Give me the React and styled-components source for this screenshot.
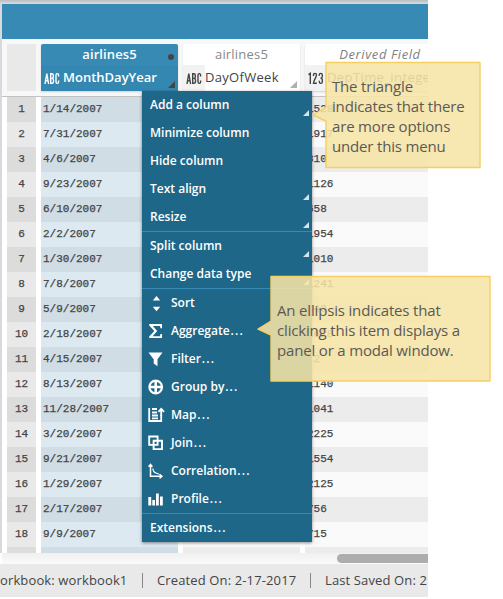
import React from "react";
import styled, { createGlobalStyle, css } from "styled-components";

const Global = createGlobalStyle`
  * { box-sizing: border-box; }
  body { margin: 0; background: #fff; font-family: "Open Sans", sans-serif; color: #444; }
`;

const Page = styled.div`
  position: relative;
  width: 503px;
  height: 599px;
  overflow: hidden;
  background: #fff;
`;
const Workbook = styled.div`
  width: 428px;
  height: 597px;
  display: flex;
  flex-direction: column;
  overflow: hidden;
`;
const TopEdge = styled.div`
  flex: none;
  height: 4px;
  background: linear-gradient(#b9bdbf, #d9dddf);
`;
const Body = styled.div`
  flex: none;
  height: 560px;
  display: flex;
`;
const LeftEdge = styled.div`
  flex: none;
  width: 2px;
  height: 549px;
  background: #d6dade;
`;
const Sheet = styled.div`
  flex: 1;
  min-width: 0;
  background: #fff;
`;
const Banner = styled.div`
  height: 35px;
  background: #368ab3;
`;
const HeaderRow = styled.div`
  height: 58px;
  padding: 5px 0 0 5px;
  display: flex;
  align-items: flex-start;
  gap: 5px;
  background: #f8f8f8;
  border-bottom: 1px solid #c2c2c2;
`;
const Corner = styled.div`
  flex: none;
  width: 29px;
  height: 47px;
  background: #e9e9e9;
`;
const HeadCell = styled.div`
  position: relative;
  flex: none;
  width: ${(p) => p.$w}px;
  height: 47px;
  border-radius: 2px 2px 0 0;
  background: ${(p) => (p.$active ? "#368ab3" : "#fff")};
  color: ${(p) => (p.$active ? "#fff" : "#444")};
  box-shadow: 0 1px 2px rgba(0, 0, 0, 0.16);
  font-weight: ${(p) => (p.$active ? 600 : 500)};
`;
const Source = styled.div`
  height: 21px;
  line-height: 21px;
  font-size: 13px;
  text-align: center;
  white-space: nowrap;
  letter-spacing: ${(p) => (p.$active ? 0.1 : 0.2)}px;
  color: ${(p) => (p.$active ? "#fff" : "#888")};
  ${(p) => p.$derived && css`
    font-style: italic;
    color: #808080;
    letter-spacing: 0.6px;
  `}
`;
const Field = styled.div`
  height: 26px;
  display: flex;
  align-items: center;
  font-size: 13px;
  background: ${(p) => (p.$active ? "#3387b0" : p.$derived ? "#f2f2f2" : "#fff")};
`;
const TypeTag = styled.span`
  flex: none;
  width: 22px;
  height: 26px;
  padding-left: 3px;
  display: flex;
  align-items: center;
  background: ${(p) => (p.$active ? "transparent" : "#f2f2f2")};
`;
const FieldName = styled.span`
  white-space: nowrap;
  line-height: 24px;
  padding-bottom: 2px;
  letter-spacing: ${(p) => p.$track || 0}px;
`;
const Dot = styled.span`
  position: absolute;
  right: 4px;
  top: 10px;
  width: 6px;
  height: 6px;
  border-radius: 50%;
  background: #444;
`;
const Triangle = styled.span`
  position: absolute;
  right: 3px;
  bottom: 3px;
  width: ${(p) => p.$s}px;
  height: ${(p) => p.$s}px;
  background: ${(p) => p.$c};
  clip-path: polygon(100% 0, 100% 100%, 0 100%);
`;
const Rows = styled.div`
  height: 456px;
  overflow: hidden;
`;
const Row = styled.div`
  height: 25px;
  padding-left: 5px;
  display: flex;
  gap: 5px;
  font: 11px/25px "Liberation Mono", monospace;
  -webkit-text-stroke: 0.25px #444;
  color: #444;
  white-space: nowrap;
`;
const Cell = styled.div`
  flex: none;
  width: ${(p) => p.$w}px;
  padding-left: 2px;
  background: ${(p) => (p.$odd ? "#ececec" : "#fafafa")};
  ${(p) => p.$kind === "num" && css`
    padding: 0;
    text-align: center;
    background: ${p.$odd ? "#dcdcdc" : "#e9e9e9"};
  `}
  ${(p) => p.$kind === "active" && css`
    background: ${p.$odd ? "#d0dde5" : "#dce9f1"};
  `}
`;
const ScrollTrack = styled.div`
  height: 11px;
  display: flex;
  justify-content: flex-end;
  padding-top: 1px;
  background: linear-gradient(#f0f0f0, #fafafa);
`;
const ScrollThumb = styled.div`
  width: 91px;
  height: 9px;
  border-radius: 5px 0 0 5px;
  background: #adadad;
`;
const Footer = styled.div`
  flex: none;
  height: 33px;
  display: flex;
  align-items: center;
  background: #e9e9e9;
  font-size: 13px;
  letter-spacing: 0.13px;
  white-space: nowrap;
`;
const FooterText = styled.span`
  flex: none;
  width: ${(p) => p.$w}px;
  margin-left: ${(p) => p.$ml}px;
  line-height: 30px;
  padding-bottom: 1px;
`;
const Divider = styled.span`
  flex: none;
  width: 1px;
  height: 15px;
  background: #888;
`;
const Menu = styled.div`
  position: absolute;
  left: 142px;
  top: 91px;
  width: 170px;
  height: 451px;
  background: #1f6788;
  color: #fff;
  box-shadow: 0 1px 3px rgba(0, 0, 0, 0.45);
`;
const MenuGroup = styled.div`
  & + & { border-top: 1px solid #368ab3; }
`;
const MenuItem = styled.div`
  position: relative;
  height: 28px;
  padding-left: ${(p) => (p.$icon ? 6 : 8)}px;
  display: flex;
  align-items: center;
  font-size: 12px;
  font-weight: 600;
  line-height: 28px;
  white-space: nowrap;
`;
const Ellipsis = styled.span`
  letter-spacing: 1.2px;
  margin-left: 0.8px;
`;
const IconSlot = styled.span`
  width: 23px;
  height: 16px;
  svg { display: block; }
`;
const Callout = styled.div`
  position: absolute;
  left: ${(p) => p.$x}px;
  top: ${(p) => p.$y}px;
  width: ${(p) => p.$w}px;
  height: ${(p) => p.$h}px;
  padding: ${(p) => p.$pt}px 0 0 20px;
  color: #5a5a55;
  font-size: 15px;
  line-height: 20px;
  letter-spacing: -0.17px;
  white-space: nowrap;
`;
const CalloutShape = styled.svg`
  position: absolute;
  left: 0;
  top: 0;
`;
const CalloutLine = styled.div`
  position: relative;
`;

const dates = ["1/14/2007", "7/31/2007", "4/6/2007", "9/23/2007", "6/10/2007", "2/2/2007", "1/30/2007", "7/8/2007", "5/9/2007", "2/18/2007", "4/15/2007", "8/13/2007", "11/28/2007", "3/20/2007", "9/21/2007", "1/29/2007", "2/17/2007", "9/9/2007", ""];
const times = ["1528", "1917", "810", "1126", "658", "1954", "1010", "1241", "840", "1628", "-2", "1140", "1041", "2225", "1554", "2125", "756", "715", ""];

const icons = {
  sort: <path d="M8.5 1L12.2 5.5H4.8zM4.8 11.8h7.4L8.5 16.3z" />,
  sum: <path d="M1.2 1H14v4.2h-1.5l-.5-2.2H4.8l4.4 5-4.6 5.2H12l.5-2.2H14V15H1.2v-1.6L6.3 8 1.2 2.6z" />,
  filter: <path d="M.5 1.5h14L9.5 8.2v7l-3.8-2.7V8.2z" />,
  group: <g fill="none" stroke="#fff"><circle cx="7.7" cy="8" r="6.3" strokeWidth="2.2" /><path d="M7.7 2v12M1.7 8h12" strokeWidth="2.5" /></g>,
  map: <g fill="none" stroke="#fff" strokeWidth="1.8"><path d="M1.2 1v14M1 14h12.2V8M4 2h5M4 5.5h5M4 8.5h6M4 11.3h6" /><path d="M13.2 9V3M10.4 4.8l2.8-3 2.8 3" /></g>,
  join: <g fill="none" stroke="#fff" strokeWidth="1.9"><path d="M1.2 1.5h8.4v8.4H1.2zM5.6 5.7h8.4v8.4H5.6z" /></g>,
  corr: <g fill="none" stroke="#fff" strokeWidth="1.5"><path d="M2.5 2v11.3h11M.6 3.8l1.9-2.3 1.9 2.3M11.5 11.2l2.4 2.1-2.4 2.1" /><path d="M4.8 5.5c.3 3.2 2.3 5 6 5.3" strokeWidth="1.2" /></g>,
  profile: <path d="M.3 6h2.9v8.5H.3zM4.3 9H7v5.5H4.3zM8 2.5h2.8v12H8zM12 5.5h2.8v9H12z" />,
};

const groups = [
  [["Add a column", null, true], ["Minimize column"], ["Hide column"], ["Text align", null, true], ["Resize", null, true]],
  [["Split column", null, true], ["Change data type", null, true]],
  [["Sort", "sort"], ["Aggregate...", "sum"], ["Filter...", "filter"], ["Group by...", "group"], ["Map...", "map"], ["Join...", "join"], ["Correlation...", "corr"], ["Profile...", "profile"]],
  [["Extensions..."]],
];

const Label = ({ text }) => {
  const dots = text.endsWith("...");
  return (
    <span>
      {dots ? text.slice(0, -3) : text}
      {dots && <Ellipsis>...</Ellipsis>}
    </span>
  );
};

const AbcIcon = ({ color }) => (
  <svg width="16" height="13" viewBox="0 0 16 13" fill="none" stroke={color} strokeWidth="1.4">
    <path d="M1 12L2.8 1.5 4.6 12M1.5 8.8h2.6M6.7 1.7v9.6h1c1.2 0 1.8-.5 1.8-1.5V8c0-1-.6-1.6-1.6-1.6.9 0 1.4-.6 1.4-1.4V3.2c0-1-.5-1.5-1.5-1.5zM6.7 6.4h1.2M14.6 4.4V3.2c0-1-.5-1.6-1.3-1.6S12 2.2 12 3.2v6.6c0 1 .5 1.6 1.3 1.6s1.3-.6 1.3-1.6V8.4" />
  </svg>
);
const NumIcon = () => (
  <svg width="16" height="13" viewBox="0 0 16 13" fill="none" stroke="#444" strokeWidth="1.4">
    <path d="M.5 2.6L2.3 1.3V12M5.5 4V3c0-1 .6-1.6 1.5-1.6S8.5 2 8.5 3c0 2.2-3 5.4-3 8.3h3.4M11.3 3.8V3c0-1 .6-1.6 1.5-1.6s1.5.6 1.5 1.6v1.6c0 1-.6 1.6-1.8 1.6 1.2 0 1.8.6 1.8 1.6v2c0 1-.6 1.6-1.5 1.6s-1.5-.6-1.5-1.6v-1" />
  </svg>
);

export default function App() {
  return (
    <>
      <Global />
      <Page>
        <Workbook>
          <TopEdge />
          <Body>
            <LeftEdge />
            <Sheet>
              <Banner />
              <HeaderRow>
                <Corner />
                <HeadCell $w={137} $active>
                  <Source $active>airlines5</Source>
                  <Field $active>
                    <TypeTag $active><AbcIcon color="#fff" /></TypeTag>
                    <FieldName>MonthDayYear</FieldName>
                  </Field>
                  <Dot />
                  <Triangle $s={7} $c="#444" />
                </HeadCell>
                <HeadCell $w={117}>
                  <Source>airlines5</Source>
                  <Field>
                    <TypeTag><AbcIcon color="#444" /></TypeTag>
                    <FieldName $track={0.3}>DayOfWeek</FieldName>
                  </Field>
                  <Triangle $s={7} $c="#b0b0b0" />
                </HeadCell>
                <HeadCell $w={150}>
                  <Source $derived>Derived Field</Source>
                  <Field $derived>
                    <TypeTag><NumIcon /></TypeTag>
                    <FieldName $track={0.4}>DepTime_intege</FieldName>
                  </Field>
                </HeadCell>
              </HeaderRow>
              <Rows>
                {dates.map((d, i) => {
                  const odd = i % 2 === 0;
                  return (
                    <Row key={i}>
                      <Cell $w={29} $kind="num" $odd={odd}>{i < 18 ? i + 1 : ""}</Cell>
                      <Cell $w={137} $kind="active" $odd={odd}>{d}</Cell>
                      <Cell $w={117} $odd={odd} />
                      <Cell $w={150} $odd={odd}>{times[i]}</Cell>
                    </Row>
                  );
                })}
              </Rows>
              <ScrollTrack><ScrollThumb /></ScrollTrack>
            </Sheet>
          </Body>
          <Footer>
            <FooterText $w={142} $ml={0}>orkbook: workbook1</FooterText>
            <Divider />
            <FooterText $w={153} $ml={14}>Created On: 2-17-2017</FooterText>
            <Divider />
            <FooterText $w={103} $ml={14}>Last Saved On: 2</FooterText>
          </Footer>
        </Workbook>
        <Menu>
          {groups.map((g, i) => (
            <MenuGroup key={i}>
              {g.map(([label, icon, more]) => (
                <MenuItem key={label} $icon={icon}>
                  {icon && <IconSlot><svg width="16" height="16" viewBox="0 0 16 16" fill="#fff" overflow="visible">{icons[icon]}</svg></IconSlot>}
                  <Label text={label} />
                  {more && <Triangle $s={6} $c="#d5e3ea" />}
                </MenuItem>
              ))}
            </MenuGroup>
          ))}
        </Menu>
        <Callout $x={312} $y={61} $w={170} $h={108} $pt={15}>
          <CalloutShape width="170" height="108" fill="rgba(246,228,166,.88)" stroke="#f6cf62" strokeWidth="1.4" strokeLinejoin="round">
            <path d="M14 1.5H168V106.5H14V60L1 54l13-8z" />
          </CalloutShape>
          {["The triangle", "indicates that there", "are more options", "under this menu"].map((t) => <CalloutLine key={t}>{t}</CalloutLine>)}
        </Callout>
        <Callout $x={257} $y={275} $w={235} $h={108} $pt={25}>
          <CalloutShape width="235" height="108" fill="rgba(246,228,166,.88)" stroke="#f6cf62" strokeWidth="1.4" strokeLinejoin="round">
            <path d="M14 1.5H233V106H14V60L1 54l13-8z" />
          </CalloutShape>
          {["An ellipsis indicates that", "clicking this item displays a", "panel or a modal window."].map((t) => <CalloutLine key={t}>{t}</CalloutLine>)}
        </Callout>
      </Page>
    </>
  );
}
